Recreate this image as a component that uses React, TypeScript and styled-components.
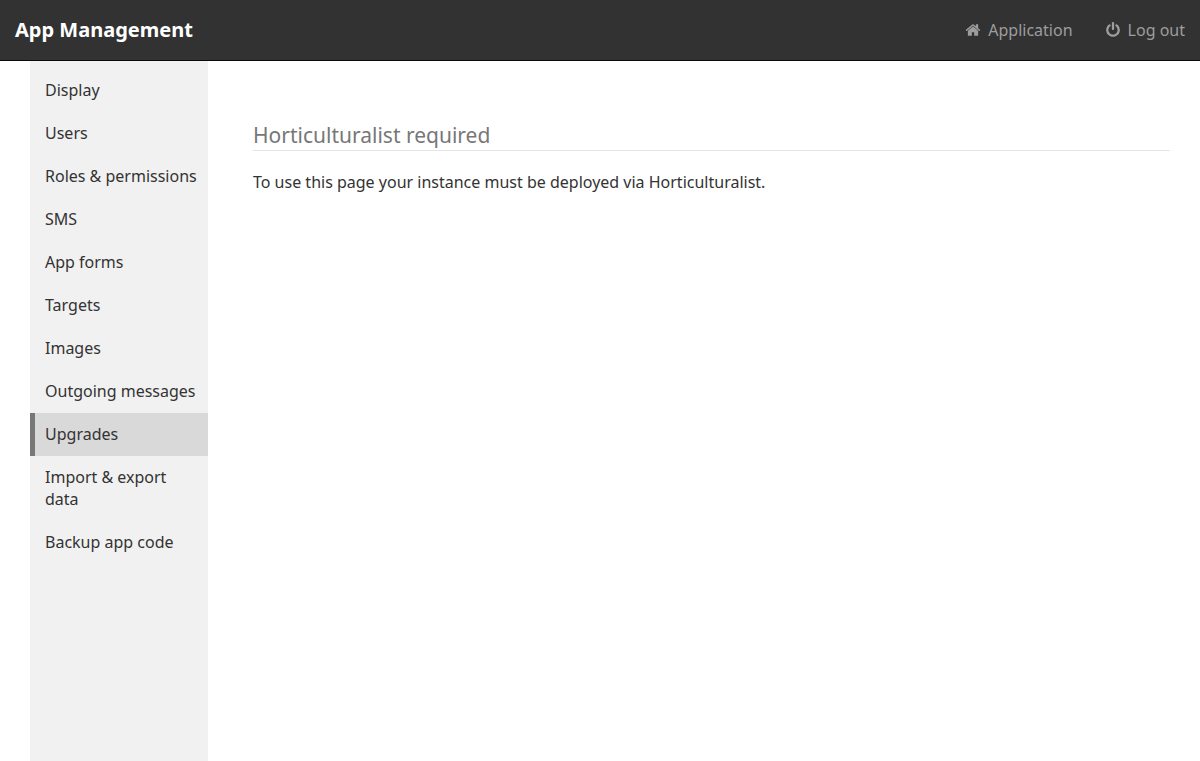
import React from "react";
import styled, { createGlobalStyle } from "styled-components";

const GlobalStyle = createGlobalStyle`
  * { box-sizing: border-box; }
  body {
    margin: 0;
    background: #fff;
    color: #333;
    font: 16px/22px "Noto Sans", sans-serif;
  }
`;

const Page = styled.div`
  display: flex;
  flex-direction: column;
  min-height: 100vh;
`;

const Header = styled.header`
  display: flex;
  align-items: center;
  justify-content: space-between;
  min-height: 61px;
  padding: 0 15px;
  background: #323232;
  border-bottom: 1px solid #0a0a0a;
`;

const Brand = styled.a`
  color: #fff;
  font-size: 20px;
  line-height: 28px;
  font-weight: 700;
  text-decoration: none;
`;

const HeaderLinks = styled.nav`
  display: flex;
  gap: 32px;
`;

const HeaderLink = styled.a`
  display: flex;
  align-items: center;
  gap: 7px;
  color: #9d9d9d;
  text-decoration: none;
`;

const Icon = styled.svg`
  width: 16px;
  height: 16px;
  fill: currentColor;
`;

const Body = styled.div`
  display: flex;
  flex: 1;
  padding: 0 30px;
`;

const Sidebar = styled.nav`
  flex: 0 0 178px;
  padding-top: 8px;
  background: #f1f1f1;
`;

const MenuList = styled.ul`
  margin: 0;
  padding: 0;
  list-style: none;
`;

const MenuLink = styled.a<{ $active: boolean }>`
  display: block;
  padding: 10px 10px 11px;
  border-left: 5px solid ${(p) => (p.$active ? "#777" : "transparent")};
  background: ${(p) => (p.$active ? "#d9d9d9" : "transparent")};
  color: #333;
  text-decoration: none;
`;

const Content = styled.main`
  flex: 1;
  min-width: 0;
  padding: 60px 0 0 45px;
`;

const Title = styled.h1`
  margin: 0 0 20px;
  border-bottom: 1px solid #e5e5e5;
  color: #777;
  font-size: 21px;
  line-height: 29px;
  font-weight: 400;
`;

const Text = styled.p`
  margin: 0;
`;

const HomeIcon = () => (
  <Icon viewBox="0 0 1792 1792" aria-hidden="true">
    <path d="M1472 992v480q0 26-19 45t-45 19h-384v-384h-256v384h-384q-26 0-45-19t-19-45v-480q0-1 .5-3t.5-3l575-474 575 474q1 2 1 6zm223-69l-62 74q-8 9-21 11h-3q-13 0-21-7l-692-577-692 577q-12 8-24 7-13-2-21-11l-62-74q-8-10-7-23.5t11-21.5l719-599q32-26 76-26t76 26l244 204v-195q0-14 9-23t23-9h192q14 0 23 9t9 23v408l219 182q10 8 11 21.5t-7 23.5z" />
  </Icon>
);

const PowerIcon = () => (
  <Icon viewBox="0 0 1792 1792" aria-hidden="true">
    <path d="M1664 896q0 156-61 298t-164 245-245 164-298 61-298-61-245-164-164-245-61-298q0-182 80.5-343t226.5-270q43-32 95.5-25t83.5 50q32 42 24.5 94.5t-49.5 84.5q-98 74-151.5 181t-53.5 228q0 104 40.5 198.5t109.5 163.5 163.5 109.5 198.5 40.5 198.5-40.5 163.5-109.5 109.5-163.5 40.5-198.5q0-121-53.5-228t-151.5-181q-42-32-49.5-84.5t24.5-94.5q31-43 84-50t95 25q146 109 226.5 270t80.5 343zm-640-768v640q0 52-38 90t-90 38-90-38-38-90v-640q0-52 38-90t90-38 90 38 38 90z" />
  </Icon>
);

const items = [
  "Display",
  "Users",
  "Roles & permissions",
  "SMS",
  "App forms",
  "Targets",
  "Images",
  "Outgoing messages",
  "Upgrades",
  "Import & export data",
  "Backup app code",
];

export default function App() {
  return (
    <Page>
      <GlobalStyle />
      <Header>
        <Brand href="#">App Management</Brand>
        <HeaderLinks>
          <HeaderLink href="#application">
            <HomeIcon />
            Application
          </HeaderLink>
          <HeaderLink href="#logout">
            <PowerIcon />
            Log out
          </HeaderLink>
        </HeaderLinks>
      </Header>
      <Body>
        <Sidebar>
          <MenuList>
            {items.map((item) => (
              <li key={item}>
                <MenuLink
                  href="#"
                  $active={item === "Upgrades"}
                  aria-current={item === "Upgrades" ? "page" : undefined}
                >
                  {item}
                </MenuLink>
              </li>
            ))}
          </MenuList>
        </Sidebar>
        <Content>
          <Title>Horticulturalist required</Title>
          <Text>To use this page your instance must be deployed via Horticulturalist.</Text>
        </Content>
      </Body>
    </Page>
  );
}
